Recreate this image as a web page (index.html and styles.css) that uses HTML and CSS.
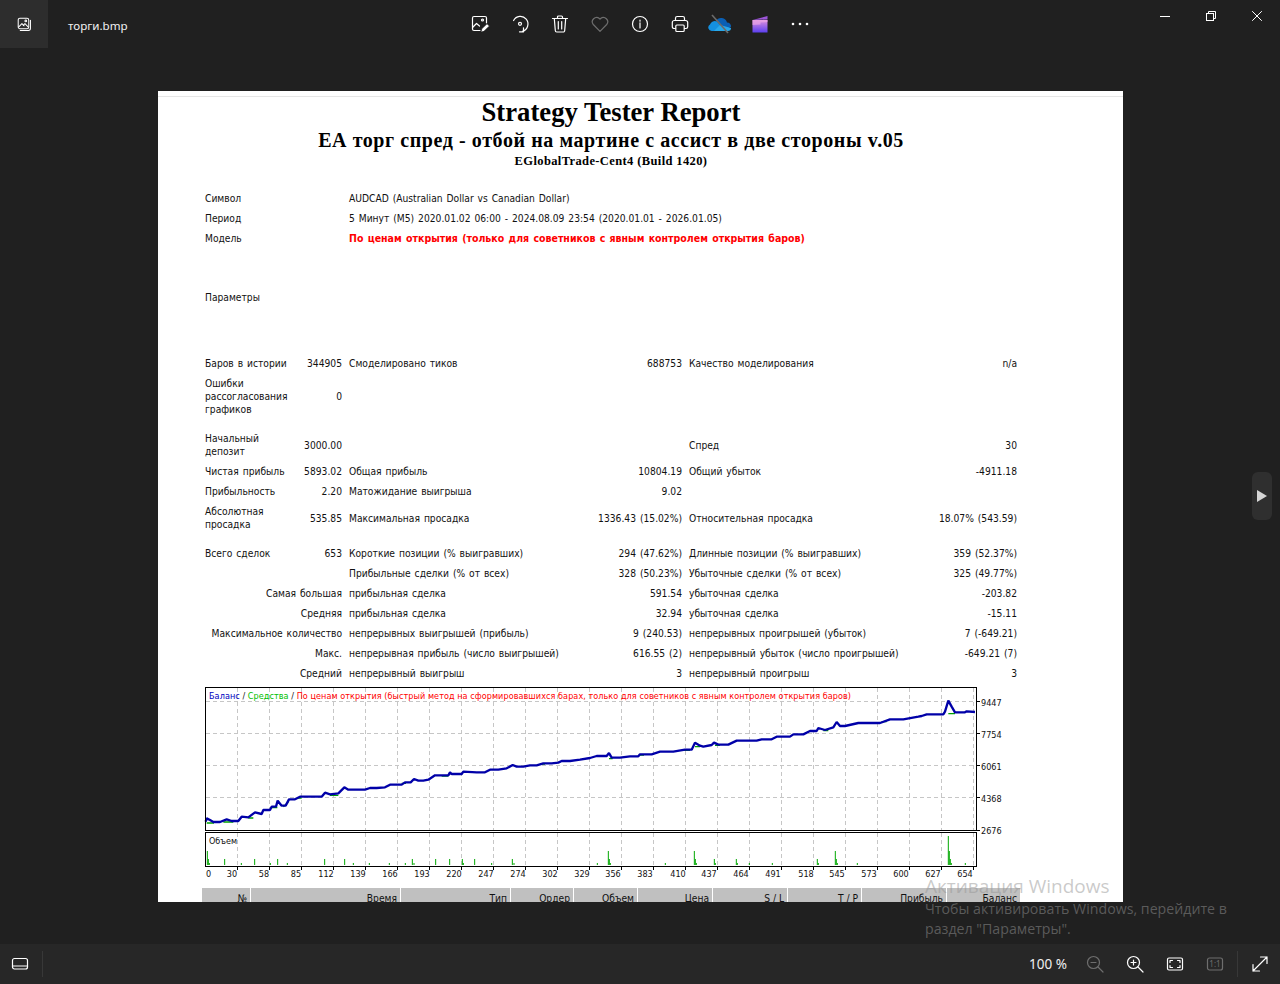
FILE: index.html
```html
<!DOCTYPE html>
<html lang="ru">
<head>
<meta charset="utf-8">
<title>торги.bmp</title>
<link rel="stylesheet" href="styles.css">
</head>
<body>
<div class="app">
  <header class="topbar">
    <div class="tile">
      <svg class="ico" viewBox="0 0 20 20"><rect x="2.600" y="2.600" width="12.400" height="12.400" rx="2"/><path d="M3 13l4-4 2.500 2.500M8.500 11l2-2 4 4"/><circle cx="11.500" cy="5.800" r="1"/><path d="M17 5v9.500a2.500 2.500 0 0 1-2.500 2.500H5"/></svg>
    </div>
    <div class="filename">торги.bmp</div>
    <nav class="tools">
      <svg class="ico tool" viewBox="0 0 20 20"><path d="M10 16.500H4a1.500 1.500 0 0 1-1.500-1.500V4A1.500 1.500 0 0 1 4 2.500h11A1.500 1.500 0 0 1 16.500 4v5"/><path d="M3 13l3.500-3.500 3 2.500"/><circle cx="12.500" cy="6" r="1"/><path class="solid" d="M11 18l.8-3.300 5.200-5 2.400 2.400-5.200 5z"/></svg>
      <svg class="ico tool" viewBox="0 0 20 20"><path d="M3.600 6.500A7.600 7.600 0 1 1 12.500 17.300"/><circle cx="10" cy="9.800" r="1.500"/><path d="M13.500 13.800v4h-4"/></svg>
      <svg class="ico tool" viewBox="0 0 20 20"><path d="M2.500 4.500h15M7.500 4.500V3a1 1 0 0 1 1-1h3a1 1 0 0 1 1 1v1.500M4.300 4.500l1 12a1.500 1.500 0 0 0 1.500 1.500h6.400a1.500 1.500 0 0 0 1.500-1.500l1-12M8.300 7.500v7.500M11.700 7.500v7.500"/></svg>
      <svg class="ico tool dim" viewBox="0 0 20 20"><path d="M10 17.300L3.300 10.500A4.300 4.300 0 0 1 9.400 4.500l.6.700.6-.7a4.300 4.300 0 0 1 6.100 6z"/></svg>
      <svg class="ico tool" viewBox="0 0 20 20"><circle cx="10" cy="10" r="7.500"/><path d="M10 8.800v5.200M10 6v1.200"/></svg>
      <svg class="ico tool" viewBox="0 0 20 20"><path d="M5.500 6.500V4.200A1.700 1.700 0 0 1 7.200 2.500h5.600a1.700 1.700 0 0 1 1.700 1.700v2.300M5.500 14.500H4A1.700 1.700 0 0 1 2.300 12.800V8.500a2 2 0 0 1 2-2h11.400a2 2 0 0 1 2 2v4.300a1.700 1.700 0 0 1-1.700 1.700h-1.500"/><rect x="5.800" y="11" width="8.400" height="6.500" rx="1"/></svg>
      <svg class="tool cloud" viewBox="0 0 24 20"><path fill="#0a5fb4" d="M8 7a6 6 0 0 1 11 1.500A4 4 0 0 1 23 13l-7 3z"/><path fill="#1490df" d="M4 17a3.500 3.500 0 0 1-2-6.500A5 5 0 0 1 9 7.500L17 17z"/><path fill="#28a8ea" d="M6 17l6-6 11 3a3 3 0 0 1-3 3z"/><path stroke="#6b6b6b" stroke-width="1.600" fill="none" d="M4 1l16 18"/></svg>
      <svg class="tool" viewBox="0 0 20 20"><defs><linearGradient id="clip" x1="0" y1="0" x2="0" y2="1"><stop offset="0" stop-color="#e08fdc"/><stop offset="1" stop-color="#5a3ff0"/></linearGradient></defs><path fill="#9c55d8" d="M2.500 6L17.500 2v3.500L2.500 6z"/><rect x="2.500" y="6" width="15" height="12.500" fill="url(#clip)"/><path fill="#e9a5e6" d="M2.500 6h15v2l-7 .5v2l-8 .5z" opacity=".7"/></svg>
      <svg class="tool" viewBox="0 0 20 20"><circle class="dot" cx="3" cy="10" r="1.300"/><circle class="dot" cx="10" cy="10" r="1.300"/><circle class="dot" cx="17" cy="10" r="1.300"/></svg>
    </nav>
    <div class="winctl">
      <svg class="wbtn" viewBox="0 0 10 10"><path d="M0 5.500h10"/></svg>
      <svg class="wbtn" viewBox="0 0 10 10"><rect x=".5" y="2.500" width="7" height="7"/><path d="M2.500 2.500V.5h7v7h-2"/></svg>
      <svg class="wbtn" viewBox="0 0 10 10"><path d="M.2.200l9.600 9.600M9.800.200L.2 9.800"/></svg>
    </div>
  </header>

  <main class="stage">
    <div class="picture">
      <div class="topline"></div>
      <div class="report">
        <h1 class="t1">Strategy Tester Report</h1>
        <h2 class="t2">ЕА торг спред - отбой на мартине с ассист в две стороны v.05</h2>
        <h3 class="t3">EGlobalTrade-Cent4 (Build 1420)</h3>

        <div class="rows">
          <div class="row"><div class="c12">Символ</div><div class="c3e">AUDCAD (Australian Dollar vs Canadian Dollar)</div></div>
          <div class="row"><div class="c12">Период</div><div class="c3e">5 Минут (M5) 2020.01.02 06:00 - 2024.08.09 23:54 (2020.01.01 - 2026.01.05)</div></div>
          <div class="row"><div class="c12">Модель</div><div class="c3e red">По ценам открытия (только для советников с явным контролем открытия баров)</div></div>
          <div class="row params"><div class="c12">Параметры</div></div>
          <div class="row sp7"><div>Баров в истории</div><div class="r">344905</div><div>Смоделировано тиков</div><div class="r">688753</div><div>Качество моделирования</div><div class="r">n/a</div></div>
          <div class="row tall"><div>Ошибки рассогласования графиков</div><div class="r">0</div></div>
          <div class="row tall sp9"><div>Начальный депозит</div><div class="r">3000.00</div><div></div><div></div><div>Спред</div><div class="r">30</div></div>
          <div class="row"><div>Чистая прибыль</div><div class="r">5893.02</div><div>Общая прибыль</div><div class="r">10804.19</div><div>Общий убыток</div><div class="r">-4911.18</div></div>
          <div class="row"><div>Прибыльность</div><div class="r">2.20</div><div>Матожидание выигрыша</div><div class="r">9.02</div></div>
          <div class="row tall"><div>Абсолютная просадка</div><div class="r">535.85</div><div>Максимальная просадка</div><div class="r">1336.43 (15.02%)</div><div>Относительная просадка</div><div class="r">18.07% (543.59)</div></div>
          <div class="row sp9"><div>Всего сделок</div><div class="r">653</div><div>Короткие позиции (% выигравших)</div><div class="r">294 (47.62%)</div><div>Длинные позиции (% выигравших)</div><div class="r">359 (52.37%)</div></div>
          <div class="row"><div></div><div></div><div>Прибыльные сделки (% от всех)</div><div class="r">328 (50.23%)</div><div>Убыточные сделки (% от всех)</div><div class="r">325 (49.77%)</div></div>
          <div class="row"><div class="c12 r">Самая большая</div><div>прибыльная сделка</div><div class="r">591.54</div><div>убыточная сделка</div><div class="r">-203.82</div></div>
          <div class="row"><div class="c12 r">Средняя</div><div>прибыльная сделка</div><div class="r">32.94</div><div>убыточная сделка</div><div class="r">-15.11</div></div>
          <div class="row"><div class="c12 r">Максимальное количество</div><div>непрерывных выигрышей (прибыль)</div><div class="r">9 (240.53)</div><div>непрерывных проигрышей (убыток)</div><div class="r">7 (-649.21)</div></div>
          <div class="row"><div class="c12 r">Макс.</div><div>непрерывная прибыль (число выигрышей)</div><div class="r">616.55 (2)</div><div>непрерывный убыток (число проигрышей)</div><div class="r">-649.21 (7)</div></div>
          <div class="row"><div class="c12 r">Средний</div><div>непрерывный выигрыш</div><div class="r">3</div><div>непрерывный проигрыш</div><div class="r">3</div></div>
        </div>

        <svg class="chart" viewBox="205 687 820 193" width="820" height="193">
          <path class="grid" d="M237.500 688V830M269.500 688V830M301.500 688V830M333.500 688V830M365.500 688V830M397.500 688V830M429.500 688V830M461.500 688V830M493.500 688V830M525.500 688V830M557.500 688V830M589.500 688V830M621.500 688V830M653.500 688V830M685.500 688V830M717.500 688V830M749.500 688V830M781.500 688V830M813.500 688V830M845.500 688V830M877.500 688V830M909.500 688V830M941.500 688V830M973.500 688V830M206 701.500H976M206 733.500H976M206 765.500H976M206 797.500H976"/>
          <path class="grid" d="M237.500 833V866M269.500 833V866M301.500 833V866M333.500 833V866M365.500 833V866M397.500 833V866M429.500 833V866M461.500 833V866M493.500 833V866M525.500 833V866M557.500 833V866M589.500 833V866M621.500 833V866M653.500 833V866M685.500 833V866M717.500 833V866M749.500 833V866M781.500 833V866M813.500 833V866M845.500 833V866M877.500 833V866M909.500 833V866M941.500 833V866M973.500 833V866"/>
          <g transform="translate(190 680) scale(.33333)">
            <path class="equity" d="M50 429H72M100 426H130M175 414H190M245 383H262M280 380L295 367M322 354H335M420 346H445M635 310H648M755 288H775M1050 252H1065M1257 236H1268M1350 225H1362M1480 211H1500M1515 200H1530M1575 196H1590M1900 152H1915M2075 125H2090M2275 101H2295"/>
            <path class="balance" d="M47 425L50 415L60 420L70 426H90L110 418L125 423H145L155 410L175 412L195 397L215 402L220 390H240L245 380H258L263 362L275 377H287L297 358H315L330 350H395L405 338L420 343L445 340L463 322L475 329H525L540 324H560L585 322L600 314H635L645 307H662L672 297L685 302H700L715 299L735 286H775L780 277L785 282H815L820 275L860 277H885L900 269H925L950 265L968 255L980 260H1000L1020 256H1040L1060 250H1085L1105 248L1115 243H1140L1170 239L1200 234L1220 228H1250L1257 219L1265 233H1290L1320 229H1345L1350 223H1385L1410 215H1450L1485 209H1505L1515 188L1530 197L1540 200L1565 195L1572 188L1585 194H1615L1640 182H1700L1715 178H1745L1760 170H1800L1810 163H1840L1860 153H1880L1885 144L1905 150L1930 142L1940 126L1950 138H1965L2005 129H2070L2100 118H2140L2185 110L2195 108L2210 103H2260L2265 95L2275 62L2285 80L2295 97H2325L2330 94L2355 96"/>
            <path class="vol" d="M52 555V513M55 555V537M58 555V549M104 555V537M154 555V549M194 555V537M241 555V549M263 555V537M292 555V549M404 555V537M464 555V537M490 555V549M538 555V549M598 555V549M646 555V549M667 555V537M672 555V549M737 555V537M779 555V537M817 555V537M820 555V549M854 555V537M905 555V549M967 555V537M972 555V549M1222 555V549M1255 555V513M1258 555V537M1261 555V549M1426 555V549M1513 555V513M1516 555V537M1519 555V549M1573 555V537M1576 555V549M1639 555V537M1642 555V549M1678 555V549M1747 555V549M1882 555V537M1885 555V549M1936 555V513M1939 555V537M1942 555V549M2002 555V549M2275 555V468M2278 555V513M2281 555V537M2284 555V549M2326 555V549"/>
          </g>
          <rect class="frame" x="205.500" y="687.500" width="771" height="143"/>
          <rect class="frame" x="205.500" y="832.500" width="771" height="34"/>
          <path class="ticks" d="M977 701.500h3M977 733.500h3M977 765.500h3M977 797.500h3M977 830.500h3M237.500 867v3M269.500 867v3M301.500 867v3M333.500 867v3M365.500 867v3M397.500 867v3M429.500 867v3M461.500 867v3M493.500 867v3M525.500 867v3M557.500 867v3M589.500 867v3M621.500 867v3M653.500 867v3M685.500 867v3M717.500 867v3M749.500 867v3M781.500 867v3M813.500 867v3M845.500 867v3M877.500 867v3M909.500 867v3M941.500 867v3M973.500 867v3"/>
          <text class="lab" x="209" y="699" textLength="642"><tspan class="blue">Баланс</tspan> / <tspan class="green">Средства</tspan> / <tspan class="redt">По ценам открытия (быстрый метод на сформировавшихся барах, только для советников с явным контролем открытия баров)</tspan></text>
          <text class="lab" x="209" y="844">Объем</text>
          <text class="lab" x="981" y="706">9447</text>
          <text class="lab" x="981" y="738">7754</text>
          <text class="lab" x="981" y="770">6061</text>
          <text class="lab" x="981" y="802">4368</text>
          <text class="lab" x="981" y="834">2676</text>
          <text class="lab" x="206" y="877">0</text>
          <text class="lab mid" x="232" y="877">30</text><text class="lab mid" x="264" y="877">58</text><text class="lab mid" x="296" y="877">85</text><text class="lab mid" x="326" y="877">112</text><text class="lab mid" x="358" y="877">139</text><text class="lab mid" x="390" y="877">166</text><text class="lab mid" x="422" y="877">193</text><text class="lab mid" x="454" y="877">220</text><text class="lab mid" x="486" y="877">247</text><text class="lab mid" x="518" y="877">274</text><text class="lab mid" x="550" y="877">302</text><text class="lab mid" x="582" y="877">329</text><text class="lab mid" x="613" y="877">356</text><text class="lab mid" x="645" y="877">383</text><text class="lab mid" x="678" y="877">410</text><text class="lab mid" x="709" y="877">437</text><text class="lab mid" x="741" y="877">464</text><text class="lab mid" x="773" y="877">491</text><text class="lab mid" x="806" y="877">518</text><text class="lab mid" x="837" y="877">545</text><text class="lab mid" x="869" y="877">573</text><text class="lab mid" x="901" y="877">600</text><text class="lab mid" x="933" y="877">627</text><text class="lab mid" x="965" y="877">654</text>
        </svg>

        <div class="thead">
          <div>№</div><div>Время</div><div>Тип</div><div>Ордер</div><div>Объем</div><div>Цена</div><div>S / L</div><div>T / P</div><div>Прибыль</div><div>Баланс</div>
        </div>
      </div>
    </div>
    <button class="next" aria-label="Далее"><span class="tri"></span></button>
    <div class="watermark">
      <div class="wm1">Активация Windows</div>
      <div class="wm2">Чтобы активировать Windows, перейдите в<br>раздел "Параметры".</div>
    </div>
  </main>

  <footer class="bottombar">
    <svg class="ico film" viewBox="0 0 20 20"><rect x="2.500" y="4.500" width="15" height="10.500" rx="2"/><path d="M2.500 12h15"/></svg>
    <span class="vsep"></span>
    <div class="zoomgroup">
      <span class="zoomval">100 %</span>
      <svg class="ico bt dim" viewBox="0 0 20 20"><circle cx="8.500" cy="8.500" r="6"/><path d="M13 13l5 5M6 8.500h5"/></svg>
      <svg class="ico bt" viewBox="0 0 20 20"><circle cx="8.500" cy="8.500" r="6"/><path d="M13 13l5 5M6 8.500h5M8.500 6v5"/></svg>
      <svg class="ico bt" viewBox="0 0 20 20"><rect x="2.500" y="4" width="15" height="12" rx="1.500"/><path d="M5 8.500V6.500h2.500M12.500 6.500H15v2M15 11.500v2h-2.500M7.500 13.500H5v-2"/></svg>
      <svg class="ico bt dim" viewBox="0 0 20 20"><rect x="2.500" y="4" width="15" height="12" rx="2"/><text class="oneone" x="10" y="12.800">1:1</text></svg>
      <span class="vsep2"></span>
      <svg class="ico bt last" viewBox="0 0 20 20"><path d="M3 17L17 3M10.500 3H17v6.500M3 10.500V17h6.500"/></svg>
    </div>
  </footer>
</div>
</body>
</html>
```
FILE: styles.css
```css
* { box-sizing: border-box; }
html, body { margin: 0; padding: 0; height: 100%; overflow: hidden; background: #202020; }
.app { width: 1280px; height: 984px; display: flex; flex-direction: column; font-family: "Noto Sans", "Open Sans", sans-serif; color: #fff; }

.ico { fill: none; stroke: #fff; stroke-width: 1.2; stroke-linecap: round; stroke-linejoin: round; }
.ico.dim { stroke: #6e6e6e; }
.ico .solid { fill: #fff; stroke: #202020; stroke-width: .7; }
.oneone { font-family: "Noto Sans", sans-serif; font-size: 8px; text-anchor: middle; fill: #6e6e6e; stroke: none; }

.topbar { height: 48px; flex: none; display: flex; align-items: flex-start; background: #202020; position: relative; }
.tile { width: 48px; height: 48px; background: #2d2d2d; display: flex; align-items: center; justify-content: center; }
.tile .ico { width: 17px; height: 17px; }
.filename { margin-left: 20px; line-height: 51px; font-size: 11.600px; width: 58px; white-space: nowrap; color: #f0f0f0; }
.tools { margin-left: 344px; display: flex; gap: 20px; height: 48px; align-items: center; }
.tool { width: 20px; height: 20px; }
.cloud { width: 24px; margin: 0 -2px; }
.dot { fill: #fff; }
.winctl { margin-left: auto; display: flex; gap: 36px; padding: 11px 18px 0 0; }
.wbtn { width: 10px; height: 10px; fill: none; stroke: #fff; stroke-width: 1; display: block; }

.stage { flex: 1; position: relative; padding: 43px 0 0 158px; background: #202020; overflow: hidden; }
.picture { width: 965px; height: 811px; background: #fff; overflow: hidden; color: #000; }
.topline { height: 6px; border-bottom: 1px solid #e6e6e6; }
.report { width: 868px; padding-left: 44px; font-family: "DejaVu Sans Condensed", "DejaVu Sans", sans-serif; font-stretch: condensed; font-size: 10.200px; word-spacing: 1px; line-height: 13px; color: #111; }
.t1, .t2, .t3 { margin: 0 0 0 3px; width: 812px; text-align: center; font-family: "Liberation Serif", serif; font-stretch: normal; font-weight: bold; color: #000; word-spacing: 0; }
.t1 { font-size: 26.700px; line-height: 31px; }
.t2 { font-size: 20px; line-height: 24px; letter-spacing: .58px; }
.t3 { font-size: 12.500px; line-height: 18px; letter-spacing: .38px; }

.rows { margin: 18px 0 0 3px; width: 812px; }
.row { display: grid; grid-template-columns: 85px 45px 230px 96px 235px 86px; column-gap: 7px; align-items: center; min-height: 20px; }
.tall { padding: 4px 0 3px; }
.sp7 { margin-top: 7px; }
.sp9 { margin-top: 9px; }
.params { height: 98px; }
.r { text-align: right; }
.c12 { grid-column: 1 / 3; }
.c3e { grid-column: 3 / 7; }
.red { color: #f00; font-weight: bold; font-size: 10.500px; }

.chart { display: block; margin: 4px 0 0 3px; overflow: visible; word-spacing: 0; }
.grid { fill: none; stroke: #c6c6c6; stroke-dasharray: 4 3; }
.frame { fill: none; stroke: #000; }
.ticks { fill: none; stroke: #000; }
.equity { fill: none; stroke: #00a000; stroke-width: 4; }
.balance { fill: none; stroke: #0000a8; stroke-width: 7; stroke-linejoin: bevel; }
.vol { fill: none; stroke: #00a800; stroke-width: 3; }
.lab { font-family: "DejaVu Sans Condensed", "DejaVu Sans", sans-serif; font-stretch: condensed; font-size: 9px; fill: #111; }
.mid { text-anchor: middle; }
.blue { fill: #0000c0; }
.green { fill: #00c000; }
.redt { fill: #ff0000; }

.thead { display: grid; grid-template-columns: 48px 149px 109px 62px 63px 74px 74px 73px 84px 73px; column-gap: 1px; margin-top: 8px; word-spacing: 0; }
.thead div { background: #c0c0c0; text-align: right; padding: 4px 3px 0 0; height: 17px; }

.next { position: absolute; left: 1252px; top: 424px; width: 20px; height: 48px; border: 0; border-radius: 6px; background: #2f2f2f; padding: 0; display: flex; align-items: center; justify-content: center; }
.tri { width: 0; height: 0; border-left: 10px solid #d6d6d6; border-top: 6px solid transparent; border-bottom: 6px solid transparent; }

.watermark { position: absolute; left: 925px; top: 825px; color: rgba(150, 150, 150, .5); font-family: "Open Sans", sans-serif; }
.wm1 { font-size: 19px; line-height: 27px; }
.wm2 { font-size: 14.200px; line-height: 20px; margin-top: -1px; }

.bottombar { height: 40px; flex: none; background: #272727; display: flex; align-items: center; position: relative; }
.film { width: 20px; height: 20px; margin-left: 10px; }
.vsep { width: 1px; height: 26px; background: #383838; margin-left: 12px; }
.zoomgroup { margin-left: auto; display: flex; align-items: center; }
.zoomval { font-size: 13.500px; color: #f0f0f0; margin-right: 18px; }
.bt { width: 20px; height: 20px; margin-right: 20px; }
.vsep2 { width: 1px; height: 26px; background: #383838; margin-left: -8px; margin-right: 12px; }
.bt.last { margin-right: 10px; }
```
